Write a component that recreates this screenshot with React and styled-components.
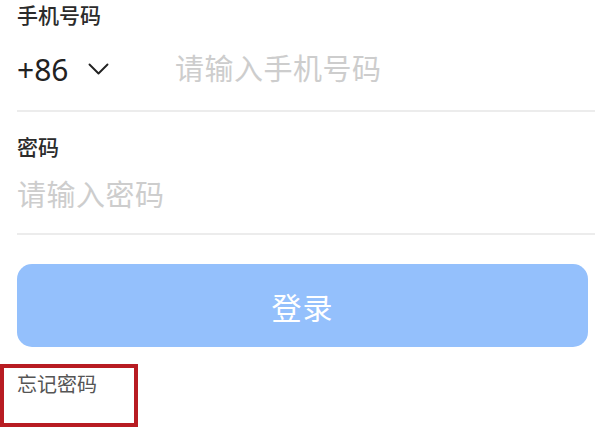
import styled, { createGlobalStyle } from "styled-components";

const GlobalStyle = createGlobalStyle`
  html, body {
    margin: 0;
    padding: 0;
    background: #fff;
  }
  body {
    font-family: "Noto Sans CJK SC", "Noto Sans", sans-serif;
  }
`;

const Page = styled.div`
  width: 600px;
  height: 427px;
  overflow: hidden;
  display: flex;
  flex-direction: column;
`;

const Field = styled.div`
  padding-left: 17px;
  display: flex;
  flex-direction: column;
`;

const Label = styled.div`
  font-size: 21px;
  line-height: 28px;
  font-weight: 500;
  color: #2b2b2b;
  margin-top: ${(p) => p.$top || 0}px;
`;

const InputRow = styled.div`
  display: flex;
  align-items: center;
  height: ${(p) => p.$height}px;
  padding-bottom: ${(p) => p.$pad || 0}px;
`;

const Code = styled.div`
  display: flex;
  align-items: center;
  width: 158px;
  font-family: "Noto Sans", sans-serif;
  font-size: 30px;
  color: #222;
  padding-top: 4px;
  svg {
    margin-left: 20px;
  }
`;

const Placeholder = styled.div`
  font-size: 29px;
  color: #cdcdcd;
  letter-spacing: 0.5px;
`;

const Divider = styled.div`
  height: 2px;
  background: #ececec;
  margin-right: 5px;
`;

const Button = styled.div`
  margin: 29px 12px 0 17px;
  height: 84px;
  border-radius: 15px;
  background: #94c0fc;
  color: #fff;
  font-size: 30px;
  display: flex;
  align-items: center;
  justify-content: center;
  letter-spacing: 1px;
`;

const ForgotBox = styled.div`
  margin-top: 17px;
  height: 52px;
  border: 4px solid #b81c22;
  padding: 3px 0 0 13px;
  box-sizing: content-box;
  width: 117px;
  font-size: 20px;
  color: #555;
  line-height: 26px;
`;

const Chevron = () => (
  <svg width="21" height="13" viewBox="0 0 21 13" fill="none">
    <path d="M1.5 1.5 L10.5 10.5 L19.5 1.5" stroke="#222" strokeWidth="1.9" strokeLinecap="round" strokeLinejoin="round" />
  </svg>
);

const App = () => {
  return (
    <>
      <GlobalStyle />
      <Page>
        <Field>
          <Label>手机号码</Label>
          <InputRow $height={78} $pad={4}>
            <Code>
              +86
              <Chevron />
            </Code>
            <Placeholder>请输入手机号码</Placeholder>
          </InputRow>
          <Divider />
          <Label $top={20}>密码</Label>
          <InputRow $height={65} $pad={8}>
            <Placeholder>请输入密码</Placeholder>
          </InputRow>
          <Divider />
        </Field>
        <Button>登录</Button>
        <ForgotBox>忘记密码</ForgotBox>
      </Page>
    </>
  );
};

export default App;
